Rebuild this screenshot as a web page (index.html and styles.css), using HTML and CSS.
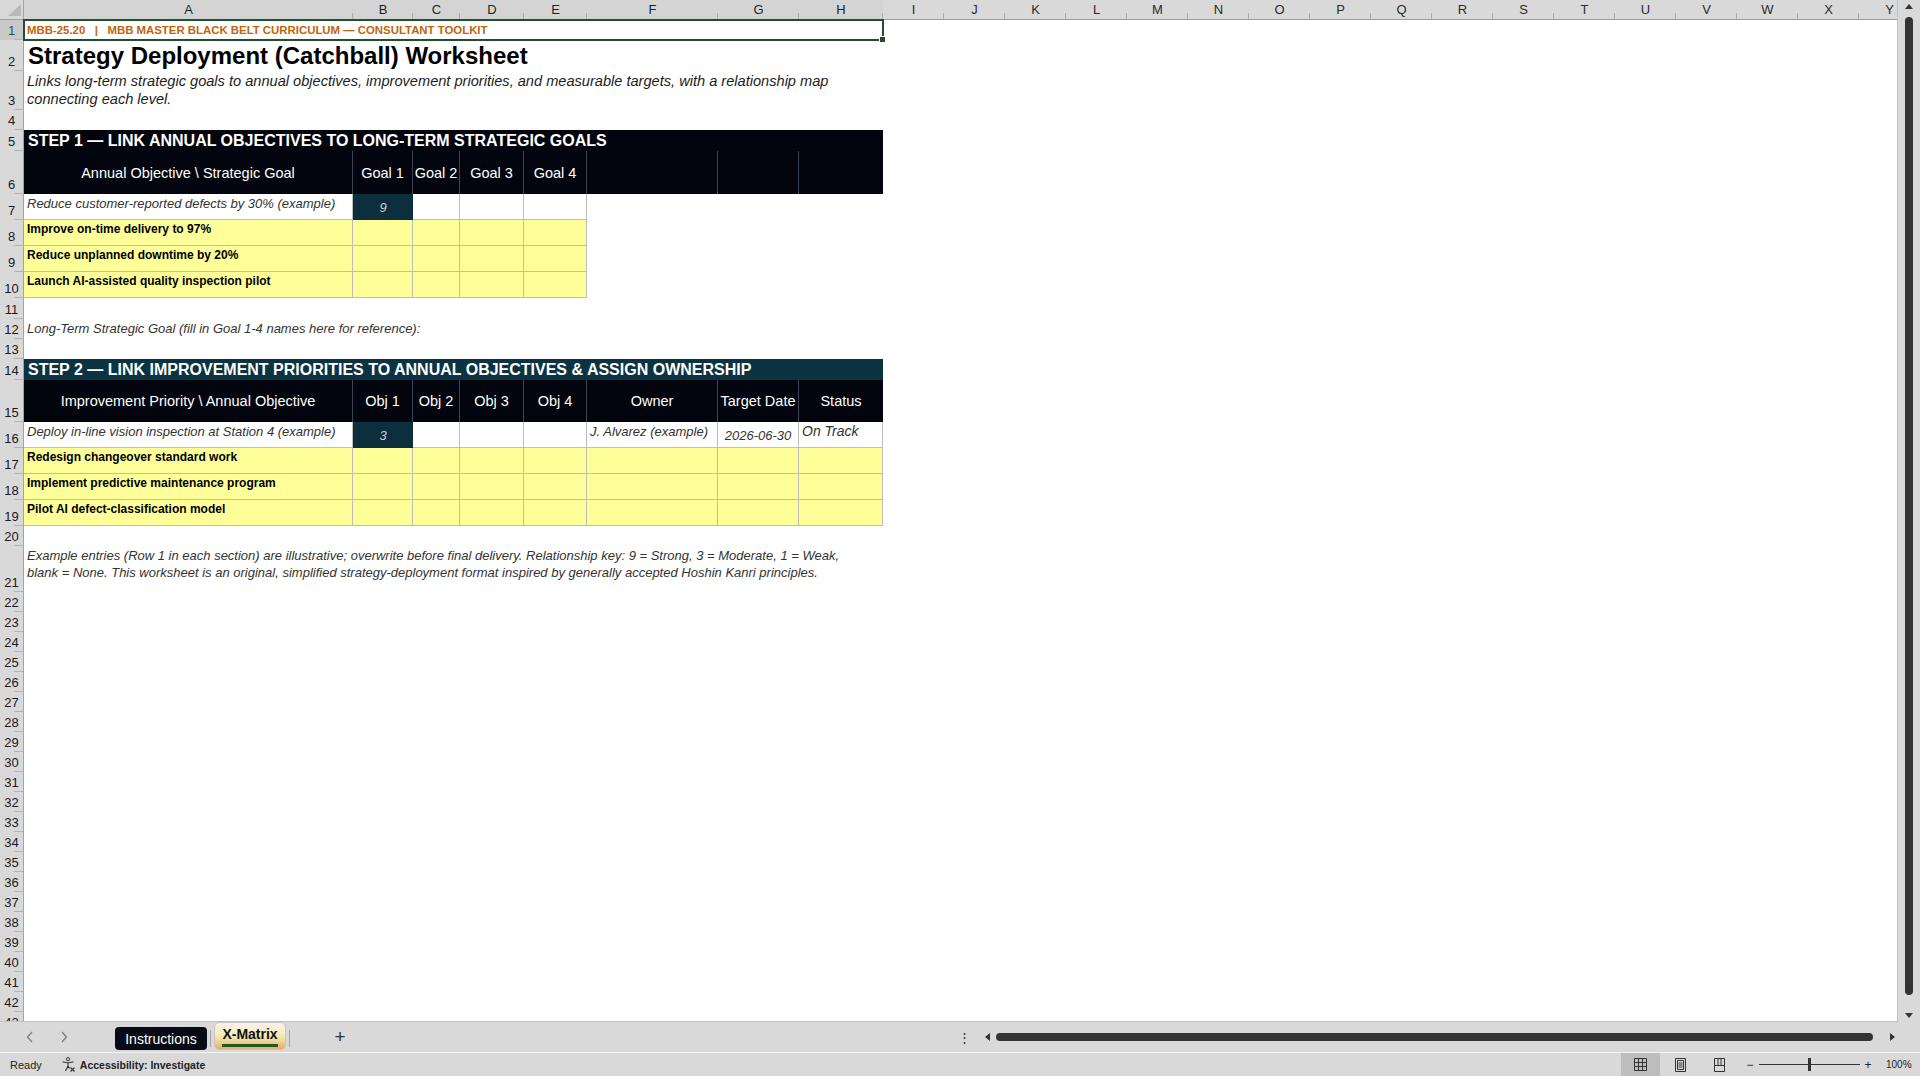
FILE: index.html
```html
<!DOCTYPE html>
<html lang="en">
<head>
    <meta charset="UTF-8">
    <meta name="viewport" content="width=device-width, initial-scale=1.0">
    <title>Strategy Deployment (Catchball) Worksheet</title>
    <link rel="stylesheet" href="styles.css">
</head>
<body>
<div class="excel">
    <div class="workarea">
        <div class="sheet">
            <!-- column letters -->
            <div class="row heads">
                <div class="corner">
                    <svg width="24" height="19" viewBox="0 0 24 19"><polygon points="21,4 21,16 8,16" fill="#b9b9b9"/></svg>
                </div>
                <div class="ch on">A</div><div class="ch on">B</div><div class="ch on">C</div><div class="ch on">D</div>
                <div class="ch on">E</div><div class="ch on">F</div><div class="ch on">G</div><div class="ch on">H</div>
                <div class="ch">I</div><div class="ch">J</div><div class="ch">K</div><div class="ch">L</div>
                <div class="ch">M</div><div class="ch">N</div><div class="ch">O</div><div class="ch">P</div>
                <div class="ch">Q</div><div class="ch">R</div><div class="ch">S</div><div class="ch">T</div>
                <div class="ch">U</div><div class="ch">V</div><div class="ch">W</div><div class="ch">X</div>
                <div class="ch">Y</div>
            </div>

            <div class="row">
                <div class="rh on">1</div>
                <div class="c span8 banner">MBB-25.20&nbsp;&nbsp;&nbsp;|&nbsp;&nbsp;&nbsp;MBB MASTER BLACK BELT CURRICULUM — CONSULTANT TOOLKIT</div>
            </div>
            <div class="row h31">
                <div class="rh">2</div>
                <div class="c span8 title">Strategy Deployment (Catchball) Worksheet</div>
            </div>
            <div class="row h39">
                <div class="rh">3</div>
                <div class="c span8 sub">Links long-term strategic goals to annual objectives, improvement priorities, and measurable targets, with a relationship map<br>connecting each level.</div>
            </div>
            <div class="row"><div class="rh">4</div></div>

            <!-- step 1 -->
            <div class="row h21">
                <div class="rh">5</div>
                <div class="c span8 bar black">STEP 1 — LINK ANNUAL OBJECTIVES TO LONG-TERM STRATEGIC GOALS</div>
            </div>
            <div class="row h43">
                <div class="rh">6</div>
                <div class="hd">Annual Objective \ Strategic Goal</div>
                <div class="hd">Goal 1</div>
                <div class="hd">Goal 2</div>
                <div class="hd">Goal 3</div>
                <div class="hd">Goal 4</div>
                <div class="hd"></div>
                <div class="hd"></div>
                <div class="hd last"></div>
            </div>
            <div class="row h26">
                <div class="rh">7</div>
                <div class="c ex">Reduce customer-reported defects by 30% (example)</div>
                <div class="val">9</div>
                <div class="c box"></div><div class="c box"></div><div class="c box"></div>
            </div>
            <div class="row h26">
                <div class="rh">8</div>
                <div class="c y b">Improve on-time delivery to 97%</div>
                <div class="c y"></div><div class="c y"></div><div class="c y"></div><div class="c y"></div>
            </div>
            <div class="row h26">
                <div class="rh">9</div>
                <div class="c y b">Reduce unplanned downtime by 20%</div>
                <div class="c y"></div><div class="c y"></div><div class="c y"></div><div class="c y"></div>
            </div>
            <div class="row h26">
                <div class="rh">10</div>
                <div class="c y b">Launch AI-assisted quality inspection pilot</div>
                <div class="c y"></div><div class="c y"></div><div class="c y"></div><div class="c y"></div>
            </div>
            <div class="row h21"><div class="rh">11</div></div>
            <div class="row">
                <div class="rh">12</div>
                <div class="c span8 note">Long-Term Strategic Goal (fill in Goal 1-4 names here for reference):</div>
            </div>
            <div class="row"><div class="rh">13</div></div>

            <!-- step 2 -->
            <div class="row h21">
                <div class="rh">14</div>
                <div class="c span8 bar teal">STEP 2 — LINK IMPROVEMENT PRIORITIES TO ANNUAL OBJECTIVES &amp; ASSIGN OWNERSHIP</div>
            </div>
            <div class="row h42">
                <div class="rh">15</div>
                <div class="hd">Improvement Priority \ Annual Objective</div>
                <div class="hd">Obj 1</div>
                <div class="hd">Obj 2</div>
                <div class="hd">Obj 3</div>
                <div class="hd">Obj 4</div>
                <div class="hd">Owner</div>
                <div class="hd">Target Date</div>
                <div class="hd last">Status</div>
            </div>
            <div class="row h26">
                <div class="rh">16</div>
                <div class="c ex">Deploy in-line vision inspection at Station 4 (example)</div>
                <div class="val">3</div>
                <div class="c box"></div><div class="c box"></div><div class="c box"></div>
                <div class="c ex">J. Alvarez (example)</div>
                <div class="c ex mid">2026-06-30</div>
                <div class="c ex big">On Track</div>
            </div>
            <div class="row h26">
                <div class="rh">17</div>
                <div class="c y b">Redesign changeover standard work</div>
                <div class="c y"></div><div class="c y"></div><div class="c y"></div><div class="c y"></div>
                <div class="c y"></div><div class="c y"></div><div class="c y"></div>
            </div>
            <div class="row h26">
                <div class="rh">18</div>
                <div class="c y b">Implement predictive maintenance program</div>
                <div class="c y"></div><div class="c y"></div><div class="c y"></div><div class="c y"></div>
                <div class="c y"></div><div class="c y"></div><div class="c y"></div>
            </div>
            <div class="row h26">
                <div class="rh">19</div>
                <div class="c y b">Pilot AI defect-classification model</div>
                <div class="c y"></div><div class="c y"></div><div class="c y"></div><div class="c y"></div>
                <div class="c y"></div><div class="c y"></div><div class="c y"></div>
            </div>
            <div class="row"><div class="rh">20</div></div>
            <div class="row h46">
                <div class="rh">21</div>
                <div class="c span8 foot">Example entries (Row 1 in each section) are illustrative; overwrite before final delivery. Relationship key: 9 = Strong, 3 = Moderate, 1 = Weak,<br>blank = None. This worksheet is an original, simplified strategy-deployment format inspired by generally accepted Hoshin Kanri principles.</div>
            </div>

            <div class="row"><div class="rh">22</div></div>
            <div class="row"><div class="rh">23</div></div>
            <div class="row"><div class="rh">24</div></div>
            <div class="row"><div class="rh">25</div></div>
            <div class="row"><div class="rh">26</div></div>
            <div class="row"><div class="rh">27</div></div>
            <div class="row"><div class="rh">28</div></div>
            <div class="row"><div class="rh">29</div></div>
            <div class="row"><div class="rh">30</div></div>
            <div class="row"><div class="rh">31</div></div>
            <div class="row"><div class="rh">32</div></div>
            <div class="row"><div class="rh">33</div></div>
            <div class="row"><div class="rh">34</div></div>
            <div class="row"><div class="rh">35</div></div>
            <div class="row"><div class="rh">36</div></div>
            <div class="row"><div class="rh">37</div></div>
            <div class="row"><div class="rh">38</div></div>
            <div class="row"><div class="rh">39</div></div>
            <div class="row"><div class="rh">40</div></div>
            <div class="row"><div class="rh">41</div></div>
            <div class="row"><div class="rh">42</div></div>
            <div class="row"><div class="rh">43</div></div>
        </div>

        <!-- vertical scrollbar -->
        <div class="vscroll">
            <span class="tri up"></span>
            <span class="vthumb"></span>
            <span class="tri down"></span>
        </div>
    </div>

    <div class="tabbar">
        <div class="nav">
            <svg width="8" height="12" viewBox="0 0 8 12"><path d="M6 1 L1.5 6 L6 11" fill="none" stroke="#7a7a7a" stroke-width="1.2"/></svg>
            <svg width="8" height="12" viewBox="0 0 8 12"><path d="M2 1 L6.5 6 L2 11" fill="none" stroke="#7a7a7a" stroke-width="1.2"/></svg>
        </div>
        <div class="tab dark">Instructions</div>
        <span class="tsep"></span>
        <div class="tab active"><span>X-Matrix</span></div>
        <span class="tsep"></span>
        <div class="add">+</div>

        <div class="hscroll">
            <span class="dots">⋮</span>
            <span class="tri left"></span>
            <span class="hthumb"></span>
            <span class="tri right"></span>
        </div>
    </div>

    <div class="status">
        <span class="ready">Ready</span>
        <svg class="a11y" width="15" height="15" viewBox="0 0 15 15">
            <circle cx="7" cy="2.2" r="1.6" fill="none" stroke="#333" stroke-width="1"/>
            <path d="M1.5 4.8 L7 6 L12.5 4.8 M7 6 L7 9 M7 9 L4.5 14 M7 9 L8.6 11.5" fill="none" stroke="#333" stroke-width="1.1"/>
            <path d="M9.5 10.5 L13.5 14.5 M13.5 10.5 L9.5 14.5" stroke="#333" stroke-width="1.1"/>
        </svg>
        <span class="a11y-text">Accessibility: Investigate</span>

        <div class="views">
            <div class="vbtn on">
                <svg width="13" height="13" viewBox="0 0 13 13"><path d="M0.5 0.5 H12.5 V12.5 H0.5 Z M0.5 4.5 H12.5 M0.5 8.5 H12.5 M4.5 0.5 V12.5 M8.5 0.5 V12.5" fill="none" stroke="#333"/></svg>
            </div>
            <div class="vbtn w41">
                <svg width="11" height="14" viewBox="0 0 11 14"><path d="M0.5 0.5 H10.5 V13.5 H0.5 Z M2.5 2.5 H8.5 V11.5 H2.5 Z M3.5 5 H7.5 M3.5 7 H7.5 M3.5 9 H7.5" fill="none" stroke="#333"/></svg>
            </div>
            <div class="vbtn w36">
                <svg width="11" height="14" viewBox="0 0 11 14"><path d="M0.5 0.5 H10.5 V13.5 H0.5 Z M4 0.5 V7.5 M7 0.5 V7.5 M0.5 7.5 H10.5" fill="none" stroke="#333"/></svg>
            </div>
            <span class="zminus">−</span>
            <span class="slider"><span class="knob"></span></span>
            <span class="zplus">+</span>
            <span class="pct">100%</span>
        </div>
    </div>
</div>
</body>
</html>
```

FILE: styles.css
```css
body {
    margin: 0;
    background: #d9d9d9;
    font-family: "Liberation Sans", Arial, sans-serif;
    overflow: hidden;
}

.excel {
    width: 1920px;
    height: 1076px;
    display: flex;
    flex-direction: column;
}

.workarea {
    display: flex;
    height: 1022px;
}

.sheet {
    width: 1898px;
    height: 1022px;
    background: #fff;
    overflow: hidden;
    box-sizing: border-box;
    border-right: 1px solid #c2c2c2;
    border-bottom: 1px solid #c2c2c2;
}

/* one spreadsheet row: row header + A..Y */
.row {
    display: grid;
    grid-template-columns: 24px 329px 60px 47px 64px 63px 131px 81px 84px repeat(17, 61px);
    height: 20px;
}
.h21 { height: 21px; }
.h22 { height: 22px; }
.h26 { height: 26px; }
.h31 { height: 31px; }
.h39 { height: 39px; }
.h42 { height: 42px; }
.h43 { height: 43px; }
.h46 { height: 46px; }

.heads {
    background: #d9d9d9;
    border-bottom: 1px solid #9d9d9d;
    box-sizing: border-box;
}
.corner {
    border-right: 1px solid #a3a3a3;
}
.corner svg { display: block; }
.ch {
    position: relative;
    display: flex;
    align-items: center;
    justify-content: center;
    font-size: 13px;
    color: #2b2b2b;
}
.ch.on { background: #d4d4d4; color: #1f1f1f; }
.ch::after {
    content: '';
    position: absolute;
    right: 0;
    bottom: 0;
    width: 1px;
    height: 6px;
    background: #ababab;
}

.rh {
    position: relative;
    display: flex;
    align-items: flex-end;
    justify-content: center;
    box-sizing: border-box;
    padding-bottom: 2px;
    background: #d9d9d9;
    border-right: 1px solid #a3a3a3;
    font-size: 13px;
    line-height: 15px;
    color: #1a1a1a;
}
.rh::after {
    content: '';
    position: absolute;
    right: 0;
    bottom: 0;
    width: 9px;
    height: 1px;
    background: #b3b3b3;
}
.rh.on { background: #c9c9c9; color: #17603a; }

/* cells */
.c {
    box-sizing: border-box;
    overflow: hidden;
    white-space: nowrap;
    padding: 2px 3px 0;
    font-size: 12px;
    line-height: 14px;
    color: #000;
}
.span8 { grid-column: span 8; }

.banner {
    position: relative;
    z-index: 2;
    overflow: visible;
    display: flex;
    align-items: center;
    padding-top: 0;
    font-size: 11.4px;
    font-weight: bold;
    color: #bf650b;
}
.banner::before {
    content: '';
    position: absolute;
    top: -1px;
    left: -1px;
    right: -1px;
    bottom: -1px;
    border: 2px solid #1f4f2f;
}
.banner::after {
    content: '';
    position: absolute;
    right: -3px;
    bottom: -3px;
    width: 5px;
    height: 5px;
    background: #1f4f2f;
    border: 1px solid #fff;
}

.title {
    padding: 0 4px;
    font-size: 24px;
    line-height: 31px;
    font-weight: bold;
}
.sub {
    padding: 1px 3px 0;
    font-size: 14.6px;
    line-height: 18px;
    font-style: italic;
    color: #1c1c1c;
}

.bar {
    display: flex;
    align-items: center;
    padding: 0 4px;
    font-size: 16px;
    font-weight: bold;
    color: #fff;
}
.black { background: #02050d; }
.teal { background: #0c3341; }

.hd {
    display: flex;
    align-items: center;
    justify-content: center;
    box-sizing: border-box;
    background: #02050d;
    border-right: 1px solid #3a4656;
    color: #fff;
    font-size: 14.5px;
    white-space: nowrap;
    overflow: hidden;
}
.hd.last { border-right: none; }

.ex, .box, .y {
    border-right: 1px solid #bdbdbd;
    border-bottom: 1px solid #bdbdbd;
}
.ex {
    font-size: 13px;
    line-height: 15px;
    font-style: italic;
    color: #333;
}
.ex.mid {
    display: flex;
    align-items: center;
    justify-content: center;
    padding: 2px 0 0;
}
.ex.big { font-size: 14px; }
.y { background: #ffff99; }
.b { font-weight: bold; }

.val {
    display: flex;
    align-items: center;
    justify-content: center;
    background: #0c2e3d;
    color: #c4d2da;
    font-size: 13px;
    font-style: italic;
}

.note {
    display: flex;
    align-items: center;
    padding-top: 0;
    font-size: 13px;
    font-style: italic;
    color: #333;
}
.foot {
    padding: 1px 3px 0;
    font-size: 13px;
    line-height: 17px;
    font-style: italic;
    color: #333;
}

/* vertical scrollbar */
.vscroll {
    width: 22px;
    display: flex;
    flex-direction: column;
    align-items: center;
    padding-top: 4px;
    box-sizing: border-box;
}
.vthumb {
    width: 8px;
    height: 978px;
    margin-top: 8px;
    border-radius: 4px;
    background: #333;
}
.tri { width: 0; height: 0; display: block; }
.tri.up {
    border-left: 4px solid transparent;
    border-right: 4px solid transparent;
    border-bottom: 5px solid #333;
}
.tri.down {
    margin-top: 18px;
    border-left: 4px solid transparent;
    border-right: 4px solid transparent;
    border-top: 5px solid #333;
}
.tri.left {
    margin-left: 15px;
    border-top: 4px solid transparent;
    border-bottom: 4px solid transparent;
    border-right: 5px solid #333;
}
.tri.right {
    margin-left: 17px;
    border-top: 4px solid transparent;
    border-bottom: 4px solid transparent;
    border-left: 5px solid #333;
}

/* sheet tabs */
.tabbar {
    height: 31px;
    display: flex;
    align-items: flex-start;
    box-sizing: border-box;
    border-bottom: 1px solid #f3f3f3;
}
.nav {
    width: 115px;
    height: 30px;
    display: flex;
    align-items: center;
}
.nav svg { margin-left: 26px; }
.tab {
    display: flex;
    align-items: center;
    justify-content: center;
    box-sizing: border-box;
    font-size: 14px;
}
.tab.dark {
    width: 92px;
    height: 23px;
    margin-top: 5px;
    border-radius: 4px;
    background: #060b16;
    color: #fff;
}
.tab.active {
    width: 72px;
    height: 28px;
    border: 1px solid #c6c6c6;
    border-radius: 5px;
    background: linear-gradient(#fdeeee 0%, #f7f0c4 35%, #f2e2a8 58%, #ecc483 82%, #e6ad68 100%);
    font-weight: bold;
    color: #111;
}
.tab.active span {
    line-height: 16px;
    padding-bottom: 2px;
    margin-top: 1px;
    border-bottom: 3px solid #1e5a26;
}
.tsep {
    width: 1px;
    height: 17px;
    margin: 8px 3px 0 3px;
    background: #a2a2a2;
}
.add {
    width: 20px;
    margin-left: 37px;
    line-height: 30px;
    text-align: center;
    font-size: 19px;
    color: #333;
}

.hscroll {
    margin-left: auto;
    width: 962px;
    height: 30px;
    display: flex;
    align-items: center;
}
.dots {
    width: 12px;
    text-align: center;
    font-size: 13px;
    color: #333;
}
.hthumb {
    width: 877px;
    height: 8px;
    margin-left: 6px;
    border-radius: 4px;
    background: #333;
}

/* status bar */
.status {
    height: 23px;
    display: flex;
    align-items: center;
    font-size: 11px;
    color: #222;
}
.ready { margin-left: 10px; }
.a11y { margin-left: 19px; }
.a11y-text {
    margin-left: 4px;
    font-size: 10.5px;
    font-weight: bold;
}
.views {
    margin-left: auto;
    margin-right: 8px;
    height: 23px;
    display: flex;
    align-items: center;
}
.vbtn {
    width: 39px;
    height: 23px;
    display: flex;
    align-items: center;
    justify-content: center;
}
.vbtn.on { background: #bdbdbd; }
.vbtn.w41 { width: 41px; }
.vbtn.w36 { width: 36px; }
.zminus, .zplus {
    width: 10px;
    text-align: center;
    font-size: 12px;
}
.zminus { margin-left: 8px; }
.zplus { margin-left: 3px; }
.slider {
    position: relative;
    width: 101px;
    height: 1px;
    margin-left: 4px;
    background: #333;
}
.knob {
    position: absolute;
    left: 49px;
    top: -6px;
    width: 3px;
    height: 13px;
    background: #333;
}
.pct {
    width: 26px;
    margin-left: 13px;
    font-size: 10px;
}
```
